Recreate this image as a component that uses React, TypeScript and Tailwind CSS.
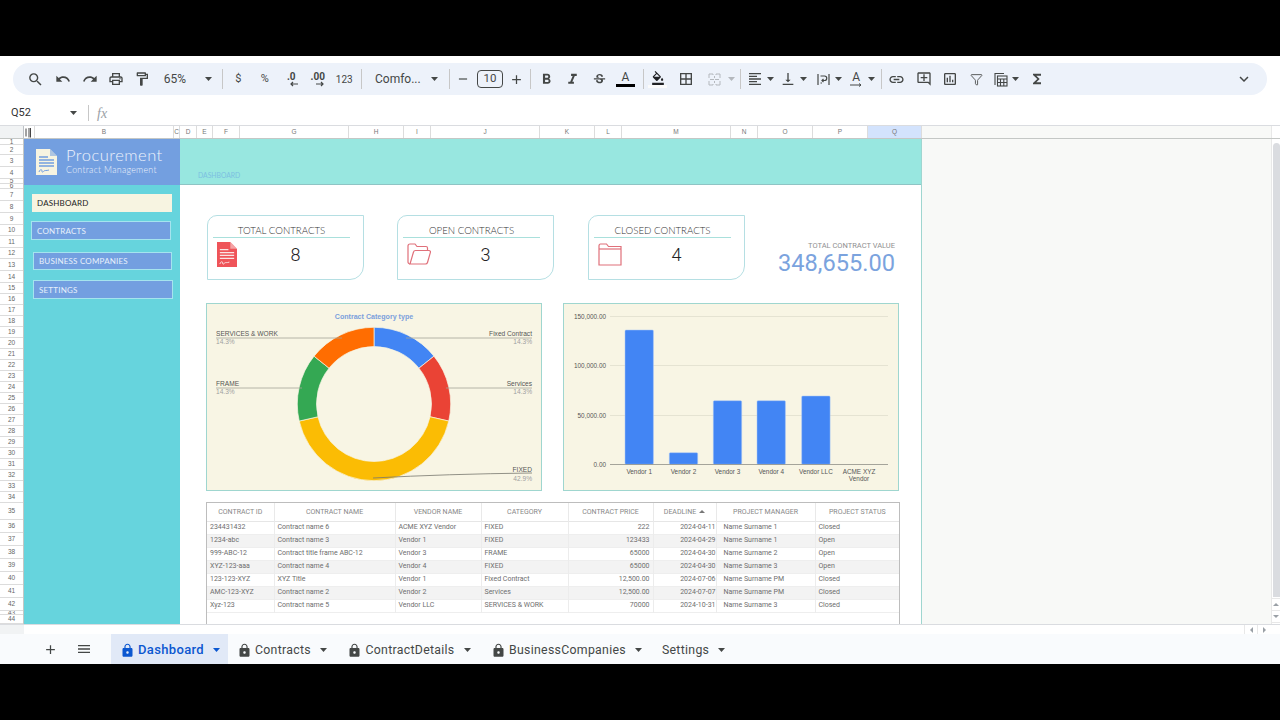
import type { ReactNode } from 'react';
import {
  MdSearch,
  MdUndo,
  MdRedo,
  MdOutlineLocalPrintshop,
  MdOutlineFormatPaint,
  MdFormatBold,
  MdFormatItalic,
  MdStrikethroughS,
  MdFormatColorFill,
  MdBorderAll,
  MdFormatAlignLeft,
  MdVerticalAlignBottom,
  MdLink,
  MdOutlineAddComment,
  MdOutlineInsertChart,
  MdFunctions,
  MdExpandMore,
  MdAdd,
  MdRemove,
  MdMenu,
  MdLock,
} from 'react-icons/md';
import { Funnel } from 'lucide-react';

const columns = [
  { label: '', w: 11 },
  { label: 'B', w: 139 },
  { label: 'C', w: 6 },
  { label: 'D', w: 17 },
  { label: 'E', w: 16 },
  { label: 'F', w: 27 },
  { label: 'G', w: 109 },
  { label: 'H', w: 55 },
  { label: 'I', w: 27 },
  { label: 'J', w: 109 },
  { label: 'K', w: 55 },
  { label: 'L', w: 27 },
  { label: 'M', w: 109 },
  { label: 'N', w: 27 },
  { label: 'O', w: 55 },
  { label: 'P', w: 55 },
  { label: 'Q', w: 54 },
];

const rowHeights = [
  6, 10, 12, 12, 5, 5, 12, 12, 12, 11, 12, 11, 12, 12, 11, 11, 11, 11, 11, 11, 11, 11, 11, 11, 11, 11,
  11, 11, 11, 11, 11, 11, 11, 11, 17, 13, 13, 13, 13, 13, 13, 13, 4, 9,
];

const contracts = [
  ['234431432', 'Contract name 6', 'ACME XYZ Vendor', 'FIXED', '222', '2024-04-11', 'Name Surname 1', 'Closed'],
  ['1234-abc', 'Contract name 3', 'Vendor 1', 'FIXED', '123433', '2024-04-29', 'Name Surname 1', 'Open'],
  ['999-ABC-12', 'Contract title frame ABC-12', 'Vendor 3', 'FRAME', '65000', '2024-04-30', 'Name Surname 2', 'Open'],
  ['XYZ-123-aaa', 'Contract name 4', 'Vendor 4', 'FIXED', '65000', '2024-04-30', 'Name Surname 3', 'Open'],
  ['123-123-XYZ', 'XYZ Title', 'Vendor 1', 'Fixed Contract', '12,500.00', '2024-07-06', 'Name Surname PM', 'Closed'],
  ['AMC-123-XYZ', 'Contract name 2', 'Vendor 2', 'Services', '12,500.00', '2024-07-07', 'Name Surname PM', 'Closed'],
  ['Xyz-123', 'Contract name 5', 'Vendor LLC', 'SERVICES & WORK', '70000', '2024-10-31', 'Name Surname 3', 'Closed'],
];

const tableHead = [
  'CONTRACT ID',
  'CONTRACT NAME',
  'VENDOR NAME',
  'CATEGORY',
  'CONTRACT PRICE',
  'DEADLINE',
  'PROJECT MANAGER',
  'PROJECT STATUS',
];

const Caret = ({ color = '#444746' }: { color?: string }) => (
  <svg width="7" height="4" viewBox="0 0 7 4" className="shrink-0">
    <path d="M0 0h7L3.5 4z" fill={color} />
  </svg>
);

const Sep = ({ className }: { className: string }) => (
  <div className={`w-px h-[20px] bg-[#c7c7c7] shrink-0 ${className}`} />
);

const Slot = ({ className = 'w-[26.5px]', children }: { className?: string; children: ReactNode }) => (
  <div className={`flex items-center justify-center shrink-0 text-[#444746] ${className}`}>{children}</div>
);

const Decimal = ({ label, dir }: { label: string; dir: 'l' | 'r' }) => (
  <div className="flex flex-col items-center leading-none">
    <span className="text-[10px] font-bold leading-[9px]">{label}</span>
    <svg width="10" height="6" viewBox="0 0 10 6" className={dir === 'l' ? 'ml-[6px]' : 'ml-[4px]'}>
      <path d={dir === 'l' ? 'M9 3H2M4 1 2 3l2 2' : 'M1 3h7M6 1l2 2-2 2'} stroke="#444746" strokeWidth="1.2" fill="none" />
    </svg>
  </div>
);

const Toolbar = () => (
  <div className="h-[32px] rounded-full bg-[#edf2fa] flex items-center pl-[9px] text-[#444746]">
    <Slot><MdSearch size={17} /></Slot>
    <Slot className="w-[26.5px] ml-[1.5px]"><MdUndo size={16} /></Slot>
    <Slot><MdRedo size={16} /></Slot>
    <Slot><MdOutlineLocalPrintshop size={16} /></Slot>
    <Slot className="w-[24px]"><MdOutlineFormatPaint size={16} /></Slot>
    <span className="ml-px w-[41px] text-center text-[12px]">65%</span>
    <div className="ml-[9px]"><Caret /></div>
    <Sep className="ml-[10.5px]" />
    <Slot className="w-[26.5px] ml-[2px] text-[11px]">$</Slot>
    <Slot className="w-[26.5px] text-[11px]">%</Slot>
    <Slot><Decimal label=".0" dir="l" /></Slot>
    <Slot><Decimal label=".00" dir="r" /></Slot>
    <Slot className="w-[26.5px] text-[10px]">123</Slot>
    <Sep className="ml-[3.5px]" />
    <span className="ml-[13px] w-[45px] text-[12px] whitespace-nowrap">Comfo...</span>
    <div className="ml-[10.5px]"><Caret /></div>
    <Sep className="ml-[11.5px]" />
    <Slot className="w-[26px]"><MdRemove size={14} /></Slot>
    <div className="ml-px w-[26px] h-[18px] rounded-[4px] border border-[#444746] flex items-center justify-center text-[11.5px]">10</div>
    <Slot className="w-[26px]"><MdAdd size={15} /></Slot>
    <Sep className="ml-px" />
    <Slot className="w-[26.5px] ml-[1.75px]"><MdFormatBold size={17} /></Slot>
    <Slot><MdFormatItalic size={17} /></Slot>
    <Slot><MdStrikethroughS size={15} /></Slot>
    <Slot>
      <div className="flex flex-col items-center w-[19px]">
        <span className="text-[12px] leading-[13px]">A</span>
        <div className="w-[19px] h-[3px] bg-black" />
      </div>
    </Slot>
    <Sep className="ml-[4px]" />
    <Slot className="w-[28px]">
      <div className="flex flex-col items-center w-[19px]">
        <MdFormatColorFill size={14} color="#202124" />
        <div className="w-[19px] h-[3px] bg-[#fbfbfb]" />
      </div>
    </Slot>
    <Slot className="w-[29px]"><MdBorderAll size={16} /></Slot>
    <Slot className="w-[27.5px]">
      <svg width="13" height="13" viewBox="0 0 13 13" fill="none" stroke="#b4b8bd" strokeWidth="1">
        <path d="M1 5V1h4v1M12 5V1H8v1M1 8v4h4v-1M12 8v4H8v-1M6 6.5H2M7 6.5h4M6.5 3v2M6.5 8v2" />
      </svg>
    </Slot>
    <Caret color="#b4b8bd" />
    <Sep className="ml-[4.5px]" />
    <Slot className="w-[23px] ml-[3px]"><MdFormatAlignLeft size={16} /></Slot>
    <Caret />
    <Slot className="w-[23px] ml-[3px]"><MdVerticalAlignBottom size={16} /></Slot>
    <Caret />
    <Slot className="w-[23px] ml-[5px]">
      <svg width="13" height="13" viewBox="0 0 13 13" fill="none" stroke="#444746" strokeWidth="1.2">
        <path d="M1 1v11M12 1v11M3.5 3h4a2 2 0 0 1 0 4.5H5M6.5 6 5 7.5 6.500 9M3.5 10H5" />
      </svg>
    </Slot>
    <Caret />
    <Slot className="w-[23px] ml-[3px]">
      <div className="flex flex-col items-center">
        <span className="text-[12px] leading-[12px]">A</span>
        <svg width="12" height="4" viewBox="0 0 12 4" fill="none" stroke="#444746" strokeWidth="1">
          <path d="M0 2h11M9 .5 11 2 9 3.500" />
        </svg>
      </div>
    </Slot>
    <Caret />
    <Sep className="ml-[6px]" />
    <Slot className="w-[26px] ml-[2px]"><MdLink size={17} /></Slot>
    <Slot className="w-[26px] ml-px"><MdOutlineAddComment size={16} /></Slot>
    <Slot className="w-[26px]"><MdOutlineInsertChart size={16} /></Slot>
    <Slot className="w-[26px] ml-px"><Funnel size={13} strokeWidth={1.6} /></Slot>
    <Slot className="w-[22px]">
      <svg width="14" height="15" viewBox="0 0 14 15" fill="none" stroke="#444746" strokeWidth="1.100">
        <path d="M1 13V1.500h9" />
        <rect x="3.500" y="4" width="9.500" height="10" />
        <path d="M3.500 7h9.500M3.500 10.500h9.500M6.500 7v7M9.800 7v7" />
      </svg>
    </Slot>
    <Caret />
    <Slot className="w-[26px] ml-[5px]"><MdFunctions size={16} /></Slot>
    <Slot className="w-[26px] ml-auto mr-[10px]"><MdExpandMore size={18} /></Slot>
  </div>
);

const FormulaBar = () => (
  <div className="h-[25px] flex items-center border-b border-[#dadce0] shrink-0">
    <span className="ml-[11px] w-[59px] text-[11px] text-[#333]">Q52</span>
    <Caret />
    <div className="ml-[11px] w-px h-[16px] bg-[#c7c7c7]" />
    <span className="ml-[8px] text-[14px] italic text-[#9aa0a6] font-['Liberation_Serif',serif]">fx</span>
  </div>
);

const DocIcon = ({ fill, line, className }: { fill: string; line: string; className: string }) => (
  <svg viewBox="0 0 21 26" className={className}>
    <path d="M0 0h14l7 7v19H0z" fill={fill} />
    <path d="M14 0l7 7h-7z" fill={line} opacity="0.55" />
    <path d="M3 8h9M3 11h15M3 14h15M3 17h15" stroke={line} strokeWidth="1.300" />
    <path d="M3 23c1-3 3-3 3-1s1 1 2 0 2 0 5-1" stroke={line} strokeWidth="1" fill="none" />
  </svg>
);

const OpenFolder = () => (
  <svg width="24" height="22" viewBox="0 0 24 22" fill="none" stroke="#e0707a" strokeWidth="1.200">
    <path d="M3 21c-1 0-2-1-2-2V3c0-1 .6-2 2-2h5l2 2.500h9c1 0 1.500.7 1.500 1.500v2.500" />
    <path d="M3 21 6.500 9c.2-.8.8-1.500 2-1.500H22c1 0 1.700.8 1.400 1.800L20.500 19.500c-.3 1-1 1.500-2 1.500z" />
  </svg>
);

const ClosedFolder = () => (
  <svg width="24" height="23" viewBox="0 0 24 23" fill="none" stroke="#e0707a" strokeWidth="1.200">
    <path d="M1 3c0-1 .6-2 1.500-2h6l2 2.500H23V22H1z" />
    <path d="M1 6h22" />
  </svg>
);

const StatCard = ({ title, value, icon, className }: { title: string; value: string; icon: ReactNode; className: string }) => (
  <div className={`w-[157px] h-[65px] shrink-0 bg-white border border-[#b5dfe3] rounded-tl-[10px] rounded-br-[14px] ${className}`}>
    <div className="ml-[5px] mr-[13px] h-[22px] border-b border-[#a9e0dc] flex items-center justify-center pt-[8px] text-[9.700px] font-light text-[#333] font-['Lato',sans-serif] whitespace-nowrap">
      {title}
    </div>
    <div className="flex items-center h-[32px] pl-[9px]">
      <div className="w-[24px] h-[26px] flex items-center shrink-0">{icon}</div>
      <div className="w-[109px] text-center text-[18px] font-light text-[#222]">{value}</div>
    </div>
  </div>
);

const sliceAngle = 360 / 7;
const donut = [
  { from: 0, to: sliceAngle, color: '#4285f4' },
  { from: sliceAngle, to: sliceAngle * 2, color: '#ea4335' },
  { from: sliceAngle * 2, to: sliceAngle * 5, color: '#fbbc04' },
  { from: sliceAngle * 5, to: sliceAngle * 6, color: '#34a853' },
  { from: sliceAngle * 6, to: 360, color: '#ff6d01' },
];

const slicePath = (from: number, to: number) => {
  const cx = 167;
  const cy = 100;
  const R = 76.7;
  const r = 57.5;
  const pt = (rad: number, deg: number) => {
    const a = ((deg - 90) * Math.PI) / 180;
    return `${cx + rad * Math.cos(a)} ${cy + rad * Math.sin(a)}`;
  };
  const large = to - from > 180 ? 1 : 0;
  return `M${pt(R, from)}A${R} ${R} 0 ${large} 1 ${pt(R, to)}L${pt(r, to)}A${r} ${r} 0 ${large} 0 ${pt(r, from)}Z`;
};

const PieChart = () => (
  <div className="w-[336px] h-[188px] border border-[#9fd6cf] bg-[#f8f5e4] shrink-0">
    <svg width="334" height="186" viewBox="0 0 334 186" className="block font-['Liberation_Sans',sans-serif]">
      <text x="167" y="15" textAnchor="middle" fontSize="7.100" fontWeight="700" fill="#7ba0dc">Contract Category type</text>
      {donut.map((s) => (
        <path key={s.color} d={slicePath(s.from, s.to)} fill={s.color} stroke="#f8f5e4" strokeWidth="0.700" />
      ))}
      <g stroke="#a3a398" strokeWidth="0.800">
        <path d="M9 34h126M199 34h126M9 84h86M239 84h86" />
        <path d="M166 174 Q240 170 325 169" fill="none" stroke="#77776f" />
      </g>
      <g fontSize="6.600" fill="#555">
        <text x="9" y="32">SERVICES &amp; WORK</text>
        <text x="9" y="82">FRAME</text>
        <text x="325" y="32" textAnchor="end">Fixed Contract</text>
        <text x="325" y="82" textAnchor="end">Services</text>
        <text x="325" y="168" textAnchor="end">FIXED</text>
      </g>
      <g fontSize="6.600" fill="#a0a0a0">
        <text x="9" y="40">14.3%</text>
        <text x="9" y="90">14.3%</text>
        <text x="325" y="40" textAnchor="end">14.3%</text>
        <text x="325" y="90" textAnchor="end">14.3%</text>
        <text x="325" y="177" textAnchor="end">42.9%</text>
      </g>
    </svg>
  </div>
);

const bars = [
  { x: 61, top: 26, label: 'Vendor 1' },
  { x: 105.300, top: 148.700, label: 'Vendor 2' },
  { x: 149.300, top: 96.700, label: 'Vendor 3' },
  { x: 193, top: 96.700, label: 'Vendor 4' },
  { x: 237.700, top: 92, label: 'Vendor LLC' },
];

const BarChart = () => (
  <div className="w-[336px] h-[188px] border border-[#9fd6cf] bg-[#f8f5e4] shrink-0">
    <svg width="334" height="186" viewBox="0 0 334 186" className="block font-['Liberation_Sans',sans-serif]">
      <path d="M46 12.500h278M46 61.500h278M46 111.500h278" stroke="#dfdecd" strokeWidth="0.800" />
      {bars.map((b) => (
        <g key={b.label}>
          <rect x={b.x} y={b.top} width="28.400" height={160.300 - b.top} rx="1" fill="#4285f4" stroke="#a9c6f7" strokeWidth="0.500" />
          <text x={b.x + 14.200} y="170" textAnchor="middle" fontSize="6.400" fill="#555">{b.label}</text>
        </g>
      ))}
      <path d="M46 160.500h278" stroke="#8f8f86" strokeWidth="0.800" />
      <g fontSize="6.400" fill="#555" textAnchor="end">
        <text x="42" y="14.500">150,000.00</text>
        <text x="42" y="63.500">100,000.00</text>
        <text x="42" y="113.500">50,000.00</text>
        <text x="42" y="162.500">0.00</text>
      </g>
      <text x="295" y="170" textAnchor="middle" fontSize="6.400" fill="#555">ACME XYZ</text>
      <text x="295" y="177" textAnchor="middle" fontSize="6.400" fill="#555">Vendor</text>
    </svg>
  </div>
);

const ContractTable = () => (
  <div className="mt-[11px] w-[694px] h-[125px] border border-b-0 border-[#bdbdbd] bg-white shrink-0 overflow-hidden">
    <table className="w-full table-fixed border-collapse text-[7px] text-[#6e6e6e]">
      <colgroup>
        <col className="w-[67px]" />
        <col className="w-[121px]" />
        <col className="w-[86px]" />
        <col className="w-[87px]" />
        <col className="w-[85px]" />
        <col className="w-[63px]" />
        <col className="w-[99px]" />
        <col />
      </colgroup>
      <thead>
        <tr className="h-[18px] border-b border-[#e6e6e6]">
          {tableHead.map((h) => (
            <th key={h} className="font-normal text-[#888] border-r border-[#e9e9e9] last:border-r-0 whitespace-nowrap">
              {h}
              {h === 'DEADLINE' && <span className="inline-block ml-[3px] align-middle w-0 h-0 border-x-[3px] border-x-transparent border-b-[3px] border-b-[#777]" />}
            </th>
          ))}
        </tr>
      </thead>
      <tbody>
        {contracts.map((row, i) => (
          <tr key={row[0]} className={`h-[13px] border-b border-[#eeeeee] ${i % 2 === 1 ? 'bg-[#f3f3f3]' : 'bg-white'}`}>
            {row.map((cell, c) => (
              <td
                key={c}
                className={`border-r border-[#ececec] last:border-r-0 whitespace-nowrap overflow-hidden ${c === 4 ? 'text-right pr-[3px]' : c === 5 ? 'text-right pr-0' : c === 6 ? 'text-left pl-[7px]' : 'text-left pl-[3px]'}`}
              >
                {cell}
              </td>
            ))}
          </tr>
        ))}
      </tbody>
    </table>
  </div>
);

const navItems = [
  { label: 'DASHBOARD', className: 'mt-[9px] ml-[8px] w-[140px] h-[18px] bg-[#f7f4e1] text-[#222]' },
  { label: 'CONTRACTS', className: 'mt-[9px] ml-[7px] w-[140px] h-[19px] bg-[#739fe0] border border-[#a5e4ee] text-[#e8f0fb]' },
  { label: 'BUSINESS COMPANIES', className: 'mt-[12px] ml-[9px] w-[139px] h-[18px] bg-[#739fe0] border border-[#a5e4ee] text-[#e8f0fb]' },
  { label: 'SETTINGS', className: 'mt-[10px] ml-[9px] w-[140px] h-[19px] bg-[#739fe0] border border-[#a5e4ee] text-[#e8f0fb]' },
];

const Sidebar = () => (
  <div className="w-[156px] shrink-0 bg-[#66d4dd] flex flex-col">
    <div className="h-[46px] bg-[#739fe0] flex items-center pl-[12px] shrink-0">
      <DocIcon fill="#f7f4e1" line="#739fe0" className="w-[21px] h-[26px] shrink-0" />
      <div className="ml-[9px] -mt-[3px] text-[#eef3fc] font-['Lato',sans-serif]">
        <div className="text-[16.500px] leading-[17px] tracking-[0.5px] font-light">Procurement</div>
        <div className="text-[8.800px] leading-[11px] tracking-[0.3px] font-light">Contract Management</div>
      </div>
    </div>
    {navItems.map((n) => (
      <div key={n.label} className={`flex items-center pl-[5px] text-[8px] tracking-[0.2px] font-['Lato',sans-serif] ${n.className}`}>
        {n.label}
      </div>
    ))}
  </div>
);

const Main = () => (
  <div className="w-[742px] shrink-0 flex flex-col bg-white">
    <div className="h-[46px] shrink-0 bg-[#98e7e0] border-b border-[#8fc4c4] flex items-end pl-[18px] pb-[4px] text-[6.800px] text-[#7cc0e0] font-['Lato',sans-serif]">
      DASHBOARD
    </div>
    <div className="pl-[26px] flex flex-col">
      <div className="mt-[30px] flex items-center">
        <StatCard className="ml-px" title="TOTAL CONTRACTS" value="8" icon={<DocIcon fill="#ef5459" line="#f9e4e4" className="w-[20px] h-[25px]" />} />
        <StatCard className="ml-[33px]" title="OPEN CONTRACTS" value="3" icon={<OpenFolder />} />
        <StatCard className="ml-[34px]" title="CLOSED CONTRACTS" value="4" icon={<ClosedFolder />} />
        <div className="w-[150px] text-right pt-[22px]">
          <div className="text-[7.500px] leading-[9px] text-[#8f8f8f]">TOTAL CONTRACT VALUE</div>
          <div className="text-[23.600px] leading-[26px] text-[#7ba3de]">348,655.00</div>
        </div>
      </div>
      <div className="mt-[23px] flex gap-[21px]">
        <PieChart />
        <BarChart />
      </div>
      <ContractTable />
    </div>
  </div>
);

const Tab = ({ label, locked, active, className }: { label: string; locked?: boolean; active?: boolean; className: string }) => (
  <div className={`h-[30px] flex items-center shrink-0 pt-[2px] ${active ? 'bg-[#e1e9f7] text-[#0b57d0] text-[13px] font-medium tracking-[0.35px]' : 'text-[#444746] text-[12.300px] tracking-[0.3px]'} ${className}`}>
    {locked && <MdLock size={15} className="shrink-0 mr-[3px]" />}
    <span className="whitespace-nowrap">{label}</span>
    <div className="ml-[9px]"><Caret color={active ? '#0b57d0' : '#444746'} /></div>
  </div>
);

const TabBar = () => (
  <div className="h-[30px] shrink-0 bg-[#f9fbfd] flex items-center text-[#444746]">
    <div className="w-[37px] ml-[32px] flex justify-center"><MdAdd size={15} /></div>
    <div className="w-[30px] flex justify-center"><MdMenu size={16} /></div>
    <Tab active locked label="Dashboard" className="ml-[12px] w-[117px] pl-[9px]" />
    <Tab locked label="Contracts" className="pl-[9px]" />
    <Tab locked label="ContractDetails" className="ml-[20.5px]" />
    <Tab locked label="BusinessCompanies" className="ml-[20.5px]" />
    <Tab label="Settings" className="ml-[20px]" />
  </div>
);

const App = () => (
  <div className="w-[1280px] h-[720px] bg-black flex flex-col overflow-hidden font-['Roboto',sans-serif]">
    <div className="h-[56px] shrink-0" />
    <div className="h-[608px] bg-white flex flex-col">
      <div className="h-[45px] shrink-0 pt-[7px] pl-[13px] pr-[13px]">
        <Toolbar />
      </div>
      <FormulaBar />
      <div className="flex h-[13px] shrink-0 border-b border-[#c4c7c5]">
        <div className="w-[24px] shrink-0 bg-[#f1f3f4] border-r border-[#bdc1c6]" />
        {columns.map((c, i) => (
          <div
            key={i}
            style={{ width: c.w }}
            className={`shrink-0 flex items-center justify-center border-r border-[#dcdcdc] text-[6.500px] text-[#777] font-['Liberation_Sans',sans-serif] ${c.label === 'Q' ? 'bg-[#d3e3fd]' : 'bg-white'}`}
          >
            {c.label}
            {i === 0 && (
              <svg width="9" height="11" viewBox="0 0 9 11" className="-ml-[2px]">
                <path d="M2 1.500v8M5 1v9.500M6.500 1v9.500" stroke="#444" strokeWidth="1" />
              </svg>
            )}
          </div>
        ))}
        <div className="flex-1 bg-[#f8f9f7]" />
        <div className="w-[9px] shrink-0 bg-white border-l border-[#e8e8e8]" />
      </div>
      <div className="flex h-[485px] shrink-0 overflow-hidden">
        <div className="w-[24px] shrink-0 bg-white border-r border-[#c4c7c5] flex flex-col overflow-hidden">
          {rowHeights.map((h, i) => (
            <div
              key={i}
              style={{ height: h }}
              className="shrink-0 flex items-center justify-center overflow-hidden border-b border-[#dcdcdc] text-[6.500px] text-[#666] font-['Liberation_Sans',sans-serif]"
            >
              {i + 1}
            </div>
          ))}
        </div>
        <div className="w-[898px] shrink-0 flex border-r border-[#9fd6d0] overflow-hidden">
          <Sidebar />
          <Main />
        </div>
        <div className="flex-1 bg-[#f8f9f7]" />
        <div className="w-[9px] shrink-0 flex flex-col border-l border-[#e8e8e8] bg-white">
          <div className="mt-[4px] h-[454px] ml-px rounded-t-full bg-[#dadce0]" />
          <div className="mt-[1px] h-[13px] border-y border-[#e8e8e8] flex items-center justify-center text-[#9aa0a6]">
            <span className="w-0 h-0 border-x-[3px] border-x-transparent border-b-[3px] border-b-[#9aa0a6]" />
          </div>
          <div className="h-[12px] border-b border-[#e8e8e8] flex items-center justify-center">
            <span className="w-0 h-0 border-x-[3px] border-x-transparent border-t-[3px] border-t-[#9aa0a6]" />
          </div>
        </div>
      </div>
      <div className="flex h-[10px] shrink-0 border-t border-[#dadce0] bg-white">
        <div className="w-[24px] bg-[#f1f3f4]" />
        <div className="flex-1" />
        <div className="w-[13px] border-l border-[#e8e8e8] flex items-center justify-center">
          <span className="w-0 h-0 border-y-[3px] border-y-transparent border-r-[3px] border-r-[#9aa0a6]" />
        </div>
        <div className="w-[13px] border-l border-[#e8e8e8] flex items-center justify-center">
          <span className="w-0 h-0 border-y-[3px] border-y-transparent border-l-[3px] border-l-[#9aa0a6]" />
        </div>
        <div className="w-[10px]" />
      </div>
      <TabBar />
    </div>
    <div className="flex-1" />
  </div>
);

export default App;
